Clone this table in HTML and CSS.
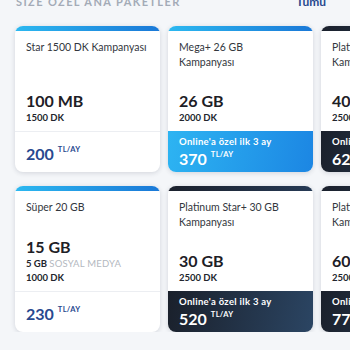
FILE: index.html
```html
<!DOCTYPE html>
<html lang="tr">
<head>
<meta charset="utf-8">
<link rel="stylesheet" href="styles.css">
</head>
<body>
<div class="page">
  <div class="header">
    <span class="header-title">SİZE ÖZEL ANA PAKETLER</span>
    <span class="header-link">Tümü</span>
  </div>
  <div class="rows">
    <div class="row">
      <div class="card">
        <div class="stripe stripe-blue"></div>
        <div class="body">
          <div class="title">Star 1500 DK Kampanyası</div>
          <div class="details">
            <div class="big">100 MB</div>
            <div class="small">1500 DK</div>
          </div>
        </div>
        <div class="footer footer-plain">
          <div class="price"><span class="amount">200</span><span class="unit">TL/AY</span></div>
        </div>
      </div>
      <div class="card">
        <div class="stripe stripe-blue"></div>
        <div class="body">
          <div class="title">Mega+ 26 GB<br>Kampanyası</div>
          <div class="details">
            <div class="big">26 GB</div>
            <div class="small">2000 DK</div>
          </div>
        </div>
        <div class="footer footer-blue">
          <div class="promo">Online'a özel ilk 3 ay</div>
          <div class="price"><span class="amount">370</span><span class="unit">TL/AY</span></div>
        </div>
      </div>
      <div class="card">
        <div class="stripe stripe-dark"></div>
        <div class="body">
          <div class="title">Platinum Star+ 40 GB<br>Kampanyası</div>
          <div class="details">
            <div class="big">40 GB</div>
            <div class="small">2500 DK</div>
          </div>
        </div>
        <div class="footer footer-dark">
          <div class="promo">Online'a özel ilk 3 ay</div>
          <div class="price"><span class="amount">620</span><span class="unit">TL/AY</span></div>
        </div>
      </div>
    </div>
    <div class="row">
      <div class="card">
        <div class="stripe stripe-blue"></div>
        <div class="body">
          <div class="title">Süper 20 GB</div>
          <div class="details">
            <div class="big">15 GB</div>
            <div class="small">5 GB <span class="muted">SOSYAL MEDYA</span></div>
            <div class="small">1000 DK</div>
          </div>
        </div>
        <div class="footer footer-plain">
          <div class="price"><span class="amount">230</span><span class="unit">TL/AY</span></div>
        </div>
      </div>
      <div class="card">
        <div class="stripe stripe-dark"></div>
        <div class="body">
          <div class="title">Platinum Star+ 30 GB<br>Kampanyası</div>
          <div class="details">
            <div class="big">30 GB</div>
            <div class="small">2500 DK</div>
          </div>
        </div>
        <div class="footer footer-dark">
          <div class="promo">Online'a özel ilk 3 ay</div>
          <div class="price"><span class="amount">520</span><span class="unit">TL/AY</span></div>
        </div>
      </div>
      <div class="card">
        <div class="stripe stripe-dark"></div>
        <div class="body">
          <div class="title">Platinum Star+ 60 GB<br>Kampanyası</div>
          <div class="details">
            <div class="big">60 GB</div>
            <div class="small">2500 DK</div>
          </div>
        </div>
        <div class="footer footer-dark">
          <div class="promo">Online'a özel ilk 3 ay</div>
          <div class="price"><span class="amount">770</span><span class="unit">TL/AY</span></div>
        </div>
      </div>
    </div>
  </div>
</div>
</body>
</html>
```
FILE: styles.css
```css
html, body {
  margin: 0;
  padding: 0;
}
body {
  background: #f4f6f9;
  font-family: Lato, "Noto Sans", sans-serif;
  color: #2b2f36;
  width: 350px;
  height: 350px;
  overflow: hidden;
}
.page {
  width: 350px;
  overflow: hidden;
}
.header {
  display: flex;
  justify-content: space-between;
  align-items: center;
  height: 16px;
  margin-top: -7px;
  padding: 0 24px 0 16px;
  margin-bottom: 17px;
}
.header-title {
  font-size: 11px;
  font-weight: 700;
  letter-spacing: 1.4px;
  color: #a3abb7;
}
.header-link {
  font-size: 12px;
  font-weight: 700;
  color: #28498f;
}
.rows {
  display: flex;
  flex-direction: column;
  gap: 14px;
  padding-left: 15px;
}
.row {
  display: flex;
  gap: 8px;
}
.card {
  flex: 0 0 145px;
  height: 146px;
  background: #fff;
  border-radius: 8px;
  overflow: hidden;
  box-shadow: 0 1px 5px rgba(30, 40, 60, 0.16);
  display: flex;
  flex-direction: column;
}
.stripe {
  height: 5px;
  flex: 0 0 5px;
}
.stripe-blue {
  background: linear-gradient(90deg, #2cb8f0, #1a78d7);
}
.stripe-dark {
  background: linear-gradient(90deg, #1b212d, #263a55);
}
.body {
  flex: 1;
  display: flex;
  flex-direction: column;
  justify-content: space-between;
  padding: 9px 10px 6px 11px;
}
.title {
  font-size: 10.5px;
  line-height: 15px;
  color: #33373e;
}
.big {
  font-size: 16px;
  font-weight: 700;
  line-height: 20px;
  color: #1d2026;
}
.small {
  font-size: 9.5px;
  font-weight: 700;
  line-height: 14px;
  color: #22262d;
}
.muted {
  font-weight: 400;
  color: #b3b8c0;
  letter-spacing: 0.2px;
}
.footer {
  flex: 0 0 41px;
  height: 41px;
  box-sizing: border-box;
  padding-left: 11px;
  display: flex;
  flex-direction: column;
}
.footer-plain {
  border-top: 1px solid #eceef2;
  justify-content: center;
  padding-top: 3px;
}
.footer-plain .amount {
  color: #28498f;
}
.footer-plain .unit {
  color: #28498f;
}
.footer-blue {
  background: linear-gradient(100deg, #2db4f2, #1c86e3);
  color: #fff;
  padding-top: 4px;
}
.footer-dark {
  background: linear-gradient(100deg, #1a202b, #2b4563);
  color: #fff;
  padding-top: 4px;
}
.promo {
  font-size: 9.5px;
  line-height: 14px;
  font-weight: 700;
  letter-spacing: 0.3px;
}
.price {
  display: flex;
  align-items: flex-start;
  line-height: 20px;
}
.amount {
  font-size: 16px;
  font-weight: 700;
  line-height: 20px;
}
.unit {
  font-size: 7.5px;
  font-weight: 700;
  line-height: 10px;
  margin-left: 4px;
  margin-top: 1px;
  letter-spacing: 0.3px;
}
```
